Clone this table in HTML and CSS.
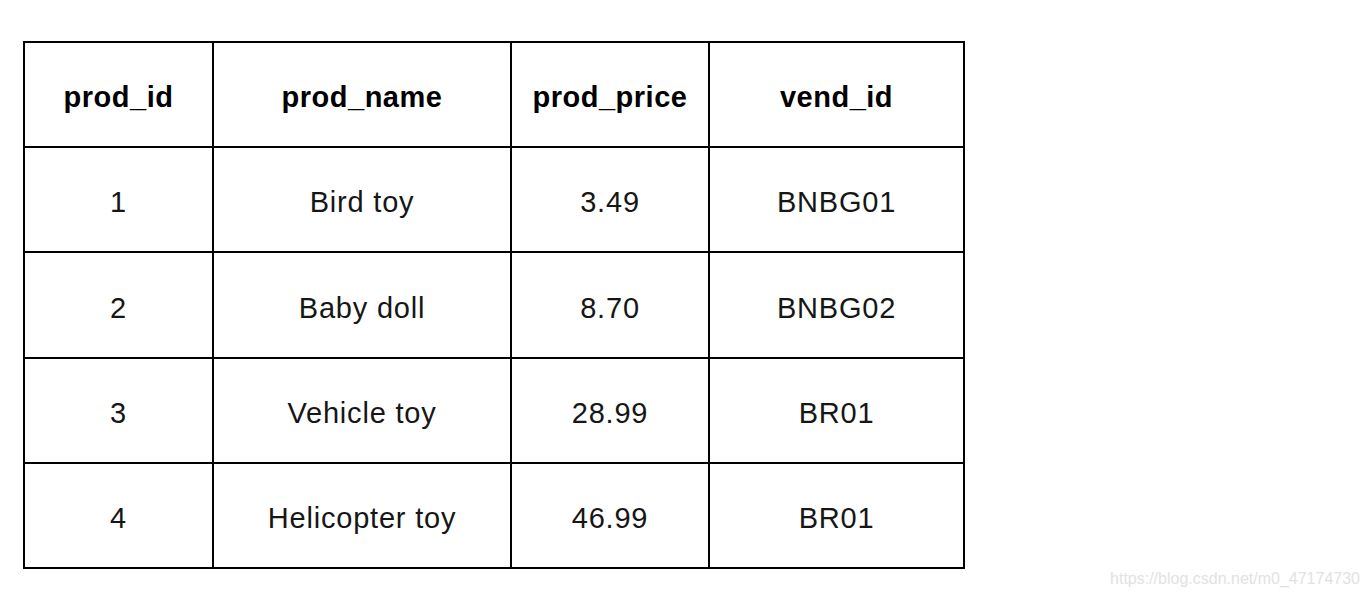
FILE: index.html
```html
<!DOCTYPE html>
<html>
<head>
<meta charset="utf-8">
<link rel="stylesheet" href="styles.css">
</head>
<body>
<div class="page">
  <div class="grid">
    <div class="cell head">prod_id</div>
    <div class="cell head">prod_name</div>
    <div class="cell head">prod_price</div>
    <div class="cell head">vend_id</div>

    <div class="cell">1</div>
    <div class="cell">Bird toy</div>
    <div class="cell">3.49</div>
    <div class="cell">BNBG01</div>

    <div class="cell">2</div>
    <div class="cell">Baby doll</div>
    <div class="cell">8.70</div>
    <div class="cell">BNBG02</div>

    <div class="cell">3</div>
    <div class="cell">Vehicle toy</div>
    <div class="cell">28.99</div>
    <div class="cell">BR01</div>

    <div class="cell">4</div>
    <div class="cell">Helicopter toy</div>
    <div class="cell">46.99</div>
    <div class="cell">BR01</div>
  </div>
  <div class="watermark">https://blog.csdn.net/m0_47174730</div>
</div>
</body>
</html>
```
FILE: styles.css
```css
html, body {
  margin: 0;
  padding: 0;
  background: #ffffff;
}
.page {
  position: relative;
  width: 1368px;
  height: 596px;
  padding: 41px 0 0 23px;
  box-sizing: border-box;
  font-family: "Liberation Sans", Arial, sans-serif;
}
.grid {
  display: grid;
  grid-template-columns: 187px 296px 196px 253px;
  grid-template-rows: 103px 103px 104px 103px 103px;
  gap: 2px;
  padding: 2px;
  background: #000;
  width: max-content;
}
.cell {
  background: #fff;
  display: flex;
  align-items: center;
  justify-content: center;
  padding-top: 6px;
  box-sizing: border-box;
  font-size: 29px;
  letter-spacing: 0.8px;
  color: #161616;
}
.head {
  font-weight: bold;
  letter-spacing: 0.5px;
  color: #000;
}
.watermark {
  position: absolute;
  right: 8px;
  bottom: 8px;
  font-size: 16px;
  color: #e2e2e2;
  font-family: "Liberation Sans", Arial, sans-serif;
}
```
